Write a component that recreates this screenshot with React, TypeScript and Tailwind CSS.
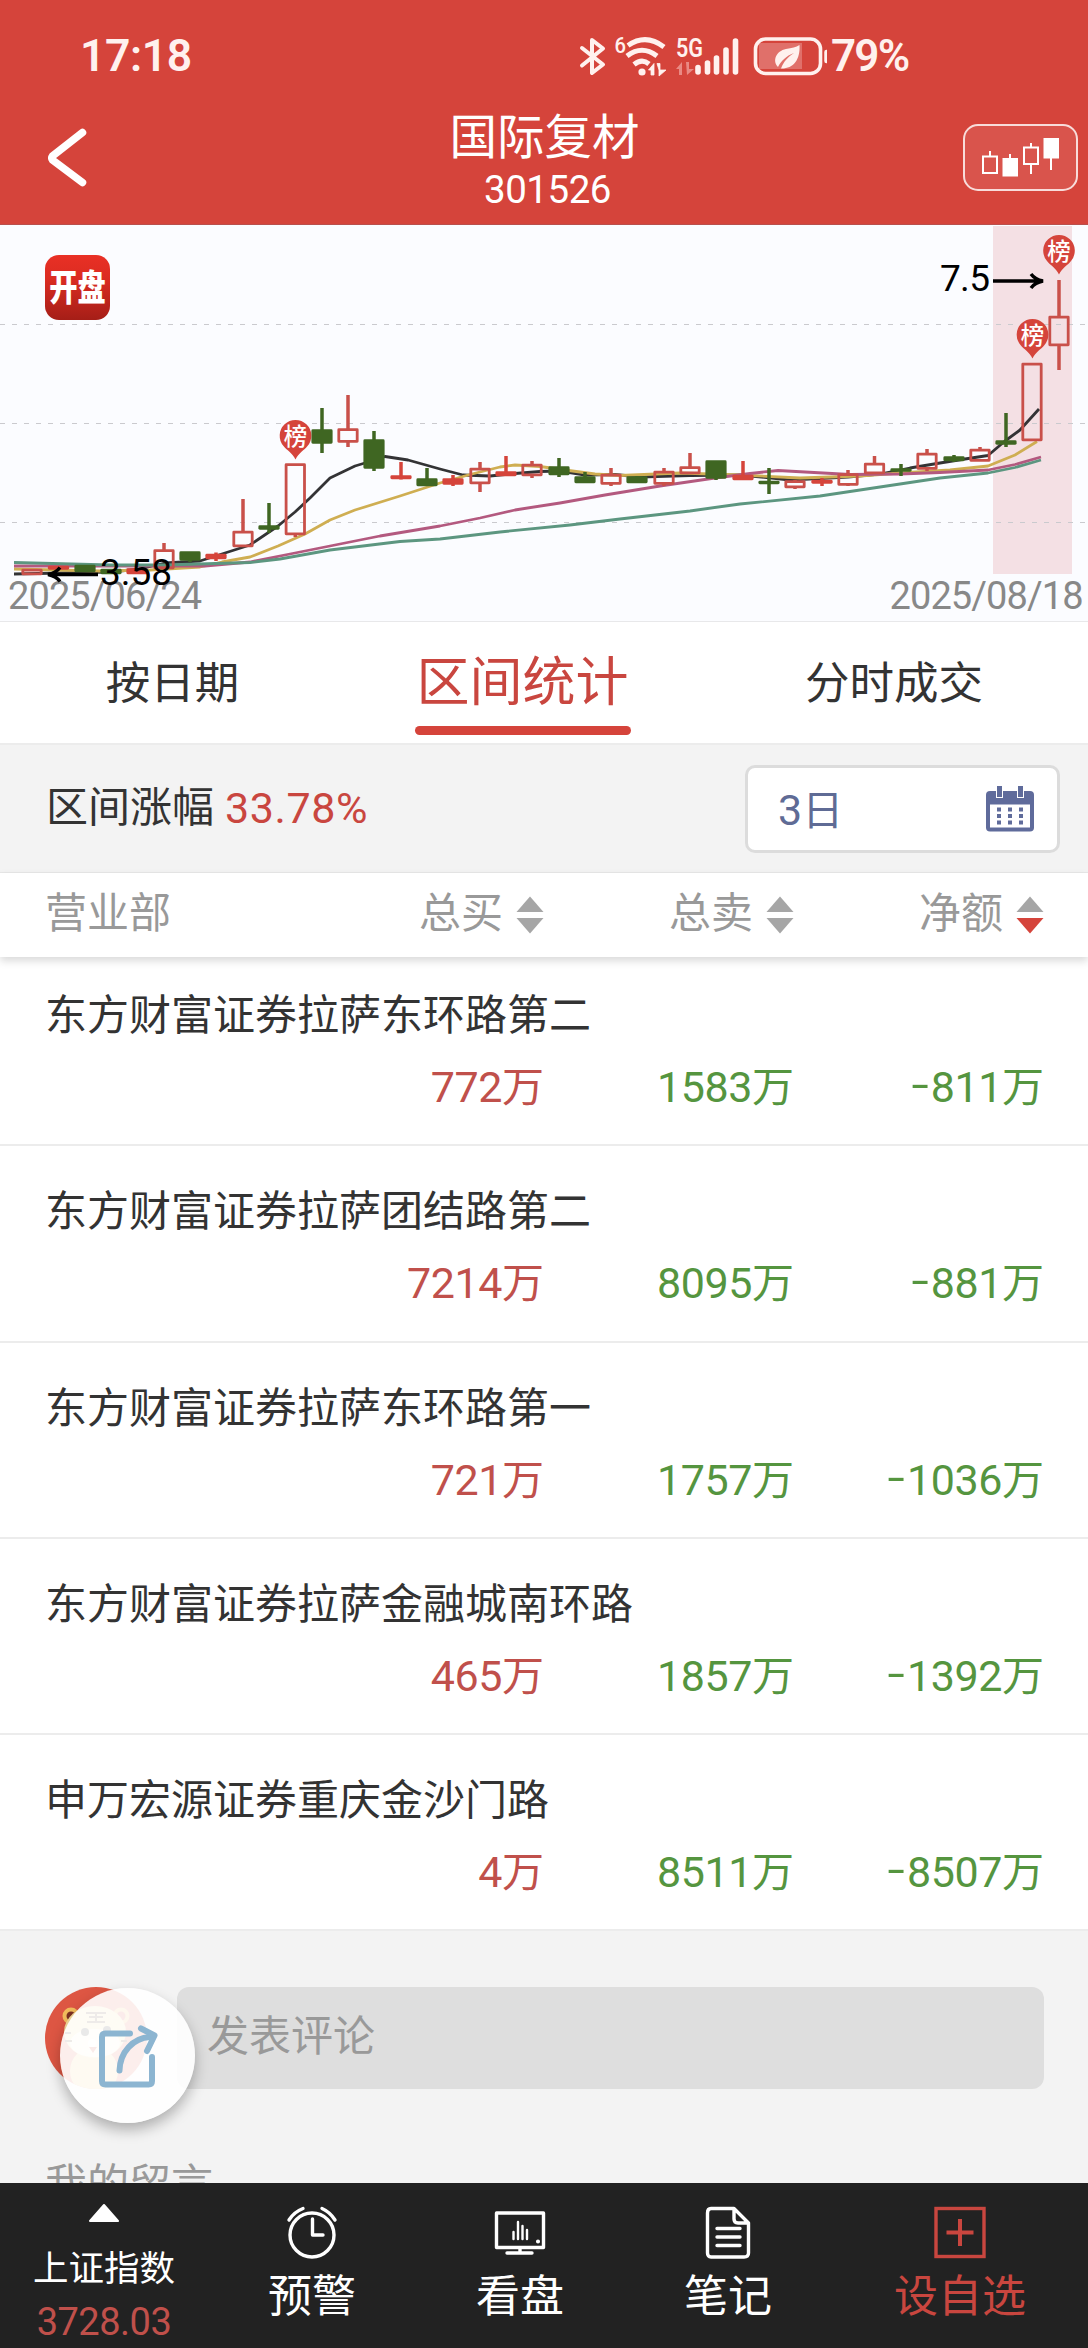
import React from "react";

type Kind = "up" | "down" | "flat";
type Candle = [x: number, top: number, bottom: number, high: number, low: number, kind: Kind];

const CANDLES: Candle[] = [
  [32, 569, 575, 569, 575, "up"],
  [58.5, 566, 569.5, 566, 569, "flat"],
  [85, 565, 572, 565, 572, "down"],
  [111, 569, 574, 569, 574, "down"],
  [137, 568.5, 574, 568, 574, "flat"],
  [164, 549.5, 569, 543, 569, "up"],
  [190, 551.5, 560.5, 551.5, 562, "down"],
  [216, 554, 559, 552.5, 561, "flat"],
  [243, 531, 547, 499, 547, "up"],
  [269, 525.5, 529.5, 503, 533, "down"],
  [295.3, 463.5, 535, 463.5, 537, "up"],
  [322, 429.5, 443.5, 408, 453, "down"],
  [348, 428.5, 442.5, 395, 447, "up"],
  [374, 439.5, 468.5, 431, 471, "down"],
  [401, 475.5, 479, 462, 479.5, "flat"],
  [427, 478.5, 486, 468, 486, "down"],
  [453, 478.5, 484.5, 475, 486, "flat"],
  [480, 468, 484, 462, 492, "up"],
  [506, 471.5, 476, 456, 476, "flat"],
  [532, 464, 476, 461, 478, "up"],
  [559, 466.5, 475, 458, 477, "down"],
  [585, 476.5, 483, 472, 483, "down"],
  [611, 474, 484.5, 468, 486, "up"],
  [637, 476.5, 483, 476, 483, "down"],
  [664, 471, 484.5, 468, 486, "up"],
  [690, 466.5, 474, 453, 474, "up"],
  [716, 460.5, 478.5, 460.5, 480, "down"],
  [743, 475, 480, 461, 480, "flat"],
  [769, 481, 484, 468, 494, "down"],
  [795, 480.5, 488, 480, 489, "up"],
  [822, 480, 483.5, 478, 486, "flat"],
  [848, 473.5, 485.5, 470, 486, "up"],
  [874.5, 463, 474, 456, 474, "up"],
  [901, 468.5, 471.5, 464, 476, "down"],
  [927, 453, 469.5, 449, 471, "up"],
  [954, 456.5, 461, 455, 462, "down"],
  [980, 449, 461.5, 447, 461.5, "up"],
  [1006, 440.5, 444.5, 413, 447, "down"],
  [1032, 363, 441, 363, 441, "up"],
  [1059, 316, 346, 280, 370, "up"],
];

const LINES: { color: string; points: string }[] = [
  {
    color: "#333335",
    points:
      "14,574 110,572 140,569 165,563 200,561 225,553 250,545 278,526 295,512 310,498 330,478 355,466 365,463 385,456.5 408,460 440,469 463,475 490,476 515,473.5 540,471.5 560,471 585,475 615,474.5 640,477 690,475.5 740,475 790,480 848,477 880,474 910,468 940,463 965,459 988,455.5 1005,441 1020,430 1039,409",
  },
  {
    color: "#cfae52",
    points:
      "14,569 100,571 150,570 200,567 222,562 250,557 278,546 305,534 330,520 355,510 400,496 440,483 470,474.5 500,467 515,465 540,466.5 565,470 595,474 620,475.5 680,473 740,475 800,478 860,476 900,473 950,470 988,466 1015,455 1037,441.5",
  },
  {
    color: "#b3597f",
    points:
      "14,566 160,566 205,566 250,562 290,554 330,546 380,536 440,526 480,518 515,510 560,503 605,495 660,486 715,478 750,473.5 778,470.5 850,474.5 900,474 940,472.5 988,470 1015,464.5 1041,457",
  },
  {
    color: "#5c9680",
    points:
      "14,562.5 110,565 165,565 250,562.5 280,559 330,550 400,541.5 440,539 500,532 570,525 620,519 690,511 740,504 820,496 880,487 940,478 988,473 1015,467.5 1041,460",
  },
];

function CandleMark({ c }: { c: Candle }) {
  const [x, top, bottom, high, low, kind] = c;
  const color = kind === "down" ? "#3f6622" : kind === "flat" ? "#d5443b" : "#c9504a";
  return (
    <g stroke={color} strokeLinejoin="round">
      {high < top && <line x1={x} x2={x} y1={high} y2={top + 1} strokeWidth={3.5} />}
      {low > bottom && <line x1={x} x2={x} y1={bottom - 1} y2={low} strokeWidth={3.5} />}
      <rect
        x={x - 9.2}
        y={top + 1.2}
        width={18.4}
        height={Math.max(bottom - top - 2.4, 0.5)}
        strokeWidth={2.8}
        fill={kind === "up" ? "none" : color}
      />
    </g>
  );
}

function Pin({ x, y }: { x: number; y: number }) {
  return (
    <g>
      <path
        d={`M${x} ${y + 23.5}C${x - 3} ${y + 17} ${x - 9} ${y + 14} ${x - 12} ${y + 10}A15.8 15.8 0 1 1 ${x + 12} ${y + 10}C${x + 9} ${y + 14} ${x + 3} ${y + 17} ${x} ${y + 23.5}Z`}
        fill="#d5443b"
      />
      <text x={x} y={y + 8.5} textAnchor="middle" fontSize="23.5" fontWeight="500" fill="#fff">
        榜
      </text>
    </g>
  );
}

function KLineChart() {
  return (
    <svg
      viewBox="0 226 1088 395"
      className="block h-[395px] w-[1088px]"
      style={{ fontFamily: 'Roboto, "Noto Sans CJK SC", sans-serif' }}
    >
      <rect x="993" y="226" width="79" height="348" fill="#f4e0e4" />
      {[324.5, 423.5, 522.5].map((y) => (
        <line key={y} x1="0" x2="1088" y1={y} y2={y} stroke="#cacace" strokeWidth="1" strokeDasharray="5 7" />
      ))}
      {LINES.map((l) => (
        <polyline key={l.color} points={l.points} fill="none" stroke={l.color} strokeWidth="2.8" strokeLinejoin="round" />
      ))}
      {CANDLES.map((c) => (
        <CandleMark key={c[0]} c={c} />
      ))}
      <Pin x={295.5} y={436} />
      <Pin x={1032.5} y={335} />
      <Pin x={1059} y={251} />
      <text x="8" y="608.5" fontSize="38" fill="#888" textLength="194" lengthAdjust="spacing">2025/06/24</text>
      <text x="889.5" y="608.5" fontSize="38" fill="#888" textLength="194" lengthAdjust="spacing">2025/08/18</text>
      <g stroke="#000" strokeWidth="3.4" fill="none">
        <path d="M98 574.5H50M60 567.5Q56 573 48 574.5Q56 576 60 581.5" />
        <path d="M993 281H1041M1031 274Q1035 279.500 1043 281Q1035 282.500 1031 288" />
      </g>
      <text x="100" y="584.500" fontSize="37" textLength="72">3.58</text>
      <text x="940" y="290.500" fontSize="37" textLength="50">7.5</text>
      <defs>
        <linearGradient id="logo" x1="0" y1="0" x2="0" y2="1">
          <stop offset="0" stopColor="#e93025" />
          <stop offset="0.35" stopColor="#dc2c22" />
          <stop offset="1" stopColor="#a51e17" />
        </linearGradient>
      </defs>
      <rect x="45" y="255" width="65" height="65" rx="14" fill="url(#logo)" />
      <g transform="translate(77.500 300.500) scale(0.82 1.05)">
        <text x="0" y="0" fontSize="34.500" fontWeight="900" fill="#fff" textAnchor="middle">
          开盘
        </text>
      </g>
    </svg>
  );
}

function StatusIcons() {
  return (
    <svg viewBox="576 30 250 50" className="h-[50px] w-[250px]" fill="none" stroke="#fff1ee">
      <path d="M581 47L602 63.500L591 72V39L602 47.500L581 64.500" strokeWidth="4" strokeLinejoin="round" strokeLinecap="round" />
      <text x="613.500" y="52" fontFamily="Roboto" fontSize="22.500" fontWeight="500" fill="#fff1ee" stroke="none" textLength="11.500" lengthAdjust="spacingAndGlyphs">6</text>
      <g strokeWidth="5">
        <path d="M627 44.500Q645 32 663 46" />
        <path d="M626 55Q641 43.500 656 55" />
        <path d="M633 63.500Q641 57 648 63" />
      </g>
      <circle cx="641" cy="71" r="3.600" fill="#fff1ee" stroke="none" />
      <path d="M647.500 69L653 62.500V74H650V69ZM656 62.500H659V69H665L658 75V69Z" fill="#fff1ee" stroke="#fff1ee" strokeWidth="0.800" />
      <text x="675" y="55.500" fontFamily="Roboto" fontSize="25.500" fontWeight="600" fill="#fff1ee" stroke="none" textLength="27" lengthAdjust="spacingAndGlyphs">5G</text>
      <path d="M675 68L681 61V74H678V68ZM685 61H688V68H693L686 74Z" fill="#e98a84" stroke="none" />
      <g strokeWidth="5.600" strokeLinecap="round">
        <path d="M697 66.500V71M706.500 62V71M715.500 57V71M725 49V71M734.500 40V71" />
      </g>
      <rect x="758" y="42" width="43" height="26" fill="#e0706a" stroke="none" />
      <rect x="754.500" y="38" width="65" height="34.500" rx="10" strokeWidth="3.600" />
      <path d="M825.500 51V60" strokeWidth="4.500" strokeLinecap="round" />
      <path d="M798.500 44C799.500 59 792 68 780 67.500C783 60 787 56 793 52C785 55 780 60 777 66C771 60 775 50 785 48C791 47 795 46.500 798.500 44Z" fill="#fff1ee" stroke="none" />
    </svg>
  );
}

function Header() {
  return (
    <header className="h-[225px] border-b border-[#b9504d] bg-[#d5443b] text-white">
      <div className="flex h-[110px] items-center pt-[2px] text-[#fff1ee]">
        <span className="ml-[80px] w-[497px] text-[44.500px] leading-none font-semibold tracking-[-0.4px]">17:18</span>
        <StatusIcons />
        <span className="ml-[4px] text-[44px] leading-none font-semibold tracking-[-1.800px]">79%</span>
      </div>
      <div className="flex h-[108px] justify-between">
        <div className="w-[125px] pt-[18px] pl-[46px]">
          <svg viewBox="0 0 42 60" className="h-[60px] w-[42px]" fill="none" stroke="#fff" strokeWidth="7.500" strokeLinecap="round" strokeLinejoin="round">
            <path d="M36.500 4.500L6.500 28Q5 30 6.500 32L36.500 54.500" />
          </svg>
        </div>
        <div className="flex flex-col items-center pl-[7px]">
          <div className="mt-[3px] mr-[6px] text-[47.500px] leading-[50px]">国际复材</div>
          <div className="mt-[6px] text-[38.500px] leading-[42px] tracking-[-0.5px]">301526</div>
        </div>
        <div className="w-[125px] pt-[14px]">
          <div className="h-[67px] w-[115px] rounded-[15px] border-2 border-[#f8dcda] bg-[#d9544c]">
            <svg viewBox="965 126 111 63" className="block h-[63px] w-[111px]" fill="none" stroke="#fff" strokeWidth="2">
              <rect x="983" y="156.500" width="14" height="16.500" />
              <rect x="1003.500" y="159" width="13.500" height="16.500" fill="#fff" />
              <rect x="1024" y="147.500" width="14" height="16.500" />
              <rect x="1044.500" y="139" width="13.500" height="18.500" fill="#fff" />
              <path d="M990 151V156M1010 154V159M1031 143V147M1031 164V174M1051 158V170" />
            </svg>
          </div>
        </div>
      </div>
    </header>
  );
}

function Sorter({ label, active }: { label: string; active?: boolean }) {
  return (
    <div className="flex w-[250px] items-center justify-end">
      <span className="mr-[13px] -mt-[2px] leading-none">{label}</span>
      <svg viewBox="0 0 28 38" className="h-[38px] w-[28px]">
        <path d="M14 0.500L27.500 16H0.500Z" fill="#a6a6a6" />
        <path d="M14 37.500L27.500 22H0.500Z" fill={active ? "#d5443b" : "#a6a6a6"} />
      </svg>
    </div>
  );
}

function Amount({ value, className }: { value: number; className: string }) {
  return (
    <div className={`w-[250px] text-right leading-[50px] whitespace-nowrap ${className}`}>
      <span className="text-[43px] tracking-[-0.4px]">
        {value < 0 && <span className="mr-[5px] inline-block origin-center -translate-y-[3px] scale-x-[1.45]">-</span>}
        {Math.abs(value)}
      </span>
      万
    </div>
  );
}

const ROWS = [
  { name: "东方财富证券拉萨东环路第二", buy: 772, sell: 1583, net: -811 },
  { name: "东方财富证券拉萨团结路第二", buy: 7214, sell: 8095, net: -881 },
  { name: "东方财富证券拉萨东环路第一", buy: 721, sell: 1757, net: -1036 },
  { name: "东方财富证券拉萨金融城南环路", buy: 465, sell: 1857, net: -1392 },
  { name: "申万宏源证券重庆金沙门路", buy: 4, sell: 8511, net: -8507 },
];

function Calendar() {
  return (
    <svg viewBox="0 0 48 46" className="h-[46px] w-[48px]">
      <rect x="0" y="5" width="48" height="40.500" rx="4" fill="#5f6b9b" />
      <rect x="4" y="18.500" width="40" height="23" fill="#fff" />
      <path d="M10 0H17V12H10ZM31 0H38V12H31Z" fill="#fff" />
      <path d="M11 0H16V11H11ZM32 0H37V11H32Z" fill="#5f6b9b" />
      <path d="M11 21.500h4v4h-4zM22 21.500h4v4h-4zM33 21.500h4v4h-4zM11 28h4v4h-4zM22 28h4v4h-4zM33 28h4v4h-4zM11 34.500h4v4h-4zM22 34.500h4v4h-4zM33 34.500h4v4h-4z" fill="#5f6b9b" />
    </svg>
  );
}

function TigerAvatar() {
  return (
    <svg viewBox="0 0 102 102" className="block h-[102px] w-[102px]">
      <defs>
        <clipPath id="disc">
          <circle cx="51" cy="51" r="51" />
        </clipPath>
      </defs>
      <g clipPath="url(#disc)">
        <rect width="102" height="102" fill="#dd5643" />
        <circle cx="26" cy="29" r="8.500" fill="#f2bc5c" />
        <circle cx="26" cy="29" r="4.500" fill="#7c2f22" />
        <circle cx="76" cy="29" r="8.500" fill="#f2bc5c" />
        <circle cx="76" cy="29" r="4.500" fill="#d5443b" />
        <ellipse cx="49" cy="84" rx="24" ry="24" fill="#f5cf80" />
        <ellipse cx="50" cy="45" rx="31" ry="26" fill="#f8dd9c" />
        <ellipse cx="50" cy="56" rx="25" ry="14" fill="#fff5e4" />
        <circle cx="40" cy="45" r="4" fill="#222" />
        <circle cx="62" cy="43" r="4" fill="#222" />
        <path d="M41 26H61M44 30H58M42 35H60M51 26V35M20 46H26M20 54H27M77 46H82M76 54H82" stroke="#5a3322" strokeWidth="2" />
        <circle cx="47" cy="56" r="4" fill="#fff" />
        <path d="M44 60L52 60L48 66Z" fill="#c0392b" />
      </g>
    </svg>
  );
}

function NavItem({ label, children, className }: { label: string; children: React.ReactNode; className: string }) {
  return (
    <div className={`flex flex-col items-center pt-[22px] ${className}`}>
      <svg viewBox="0 0 54 54" className="h-[54px] w-[54px]" fill="none" stroke="currentColor" strokeWidth="3.400" strokeLinejoin="round" strokeLinecap="round">
        {children}
      </svg>
      <span className="mt-[14px] text-[44px] leading-[48px]">{label}</span>
    </div>
  );
}

export default function App() {
  return (
    <div className="flex h-[2348px] w-[1088px] flex-col overflow-hidden bg-white font-[Roboto,'Noto_Sans_CJK_SC',sans-serif] text-[42px] text-[#333]">
      <Header />
      <div className="h-[397px] border-b border-[#e8e8ea] bg-[#fbfcff] pt-px">
        <KLineChart />
      </div>

      <nav className="flex h-[123px] items-center border-b-2 border-[#ececec] text-[44.500px]">
        <div className="w-[345px] pt-[3px] text-center leading-none">按日期</div>
        <div className="flex h-full w-[355px] flex-col items-center text-[#c9463f]">
          <span className="mt-[31px] text-[53px] leading-[60px]">区间统计</span>
          <span className="mt-[13px] h-[9px] w-[216px] rounded-full bg-[#d5443b]" />
        </div>
        <div className="w-[388px] pt-[3px] text-center leading-none">分时成交</div>
      </nav>

      <section className="flex h-[128px] items-center border-b border-[#e8e8e8] bg-[#f3f3f3] pl-[46px]">
        <span className="-mt-px leading-none">区间涨幅</span>
        <span className="-mt-px ml-[11px] w-[520px] text-[43px] leading-none tracking-[0.6px] text-[#c9463f]">33.78%</span>
        <div className="mt-px flex h-[88px] w-[315px] items-center justify-between rounded-[10px] border-[3px] border-[#dcdcdc] bg-white pr-[23px] pl-[30px] text-[#5f6b95]">
          <span className="pt-[2px] text-[41px] leading-none">
            <span className="text-[43px]">3</span>日
          </span>
          <Calendar />
        </div>
      </section>

      <section className="relative flex h-[84px] items-center bg-white pl-[45px] text-[#999] shadow-[0_4px_8px_rgba(0,0,0,0.15)]">
        <span className="-mt-[2px] w-[249px] leading-none">营业部</span>
        <Sorter label="总买" />
        <Sorter label="总卖" />
        <Sorter label="净额" active />
      </section>

      <div className="-mt-[7px] flex flex-col">
        {ROWS.map((r) => (
          <div key={r.name} className="h-[196.300px] border-b-2 border-[#ececec] pt-[41px]">
            <div className="pl-[45px] leading-[50px]">{r.name}</div>
            <div className="mt-[21px] flex pl-[294px]">
              <Amount value={r.buy} className="text-[#c0504b]" />
              <Amount value={r.sell} className="text-[#55953f]" />
              <Amount value={r.net} className="text-[#55953f]" />
            </div>
          </div>
        ))}
      </div>

      <section className="min-h-0 flex-1 overflow-hidden bg-[#f3f3f3] pt-[56px] text-[#999]">
        <div className="relative flex pl-[45px]">
          <TigerAvatar />
          <div className="ml-[30px] flex h-[102px] w-[867px] items-center rounded-[12px] bg-[#dedede] pl-[30px]">
            <span className="-mt-[2px] leading-none">发表评论</span>
          </div>
          <div className="absolute top-px left-[60px] flex size-[135px] items-center justify-center rounded-full bg-white/90 shadow-[0_7px_14px_rgba(0,0,0,0.28)]">
            <svg viewBox="0 0 60 64" className="h-[64px] w-[60px]" fill="none" stroke="#8cb5d1" strokeWidth="6" strokeLinecap="round" strokeLinejoin="round">
              <path d="M32 9.500H7.500Q4 9.500 4 13V57Q4 60.500 7.500 60.500H50.500Q54 60.500 54 57V33" />
              <path d="M21.500 46.500C22 28 35 14 52 13" />
              <path d="M43 4.500L56.500 11.500L49 27" />
            </svg>
          </div>
        </div>
        <div className="mt-[71px] pl-[45px] leading-[50px]">我的留言</div>
      </section>

      <footer className="flex h-[165px] shrink-0 bg-[#222] text-white">
        <div className="flex w-[208px] flex-col items-center pt-[21px]">
          <svg viewBox="0 0 30 18" className="h-[18px] w-[30px]">
            <path d="M15 1L29 17H1Z" fill="#fff" stroke="#fff" strokeWidth="2" strokeLinejoin="round" />
          </svg>
          <span className="mt-[27px] text-[35.500px] leading-[40px]">上证指数</span>
          <span className="mt-[12px] text-[38px] leading-[42px] tracking-[-0.500px] text-[#c0504b]">3728.03</span>
        </div>
        <NavItem label="预警" className="w-[208px]">
          <circle cx="27" cy="30" r="22" />
          <path d="M27.500 14V30H38M4 15Q9 7 18 3.500M50 15Q45 7 37 3.500" />
        </NavItem>
        <NavItem label="看盘" className="w-[208px]">
          <path d="M3.500 8H50.500V42.500H3.500ZM14 48H39M27 43V47" />
          <path d="M20.500 27V34M25 17V34M29.500 21V34M34 25V34" strokeWidth="2.400" />
          <circle cx="45" cy="36.500" r="1.300" fill="currentColor" strokeWidth="1.500" />
        </NavItem>
        <NavItem label="笔记" className="w-[208px]">
          <path d="M10 3.500H33L47.500 18V48Q47.500 52 43 52H10Q6.500 52 6.500 48V8Q6.500 3.500 10 3.500ZM33 3.500V14Q33 18 37 18H47.500" />
          <path d="M16 23.500H39M16 32H39M16 40.500H39" />
        </NavItem>
        <NavItem label="设自选" className="w-[256px] text-[#c9463f]">
          <rect x="3" y="3.500" width="48" height="48" strokeLinejoin="miter" />
          <path d="M27 14V41M13.500 27.500H40.500" strokeWidth="4" strokeLinecap="butt" />
        </NavItem>
      </footer>
    </div>
  );
}
